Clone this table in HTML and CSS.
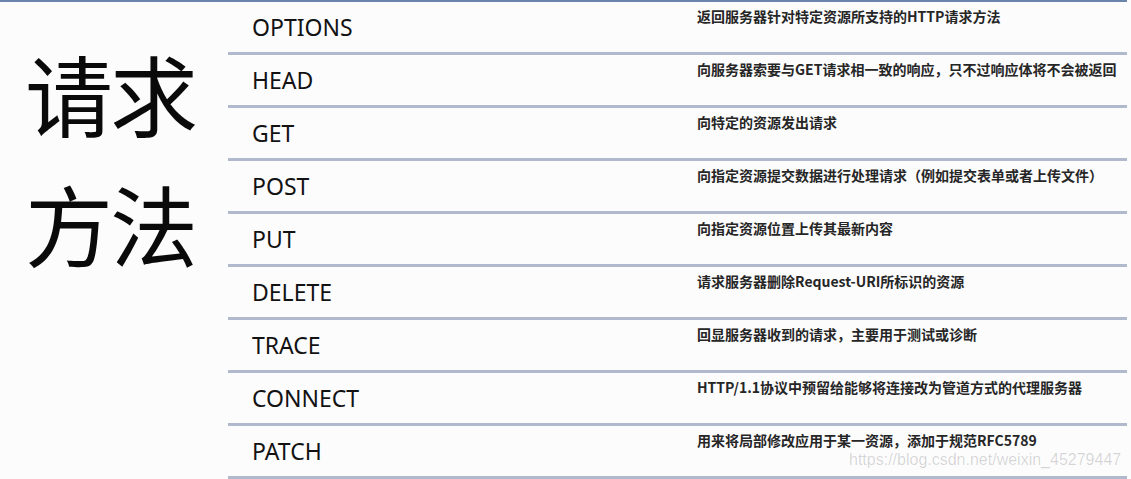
FILE: index.html
```html
<!DOCTYPE html>
<html lang="zh">
<head>
<meta charset="utf-8">
<title>请求方法</title>
<link rel="stylesheet" href="styles.css">
</head>
<body>
<div class="slide">
  <div class="topline"></div>
  <div class="content">
    <div class="title">请求<br>方法</div>
    <div class="table">
      <div class="row"><div class="name">OPTIONS</div><div class="desc">返回服务器针对特定资源所支持的HTTP请求方法</div></div>
      <div class="row"><div class="name">HEAD</div><div class="desc">向服务器索要与GET请求相一致的响应，只不过响应体将不会被返回</div></div>
      <div class="row"><div class="name">GET</div><div class="desc">向特定的资源发出请求</div></div>
      <div class="row"><div class="name">POST</div><div class="desc">向指定资源提交数据进行处理请求（例如提交表单或者上传文件）</div></div>
      <div class="row"><div class="name">PUT</div><div class="desc">向指定资源位置上传其最新内容</div></div>
      <div class="row"><div class="name">DELETE</div><div class="desc">请求服务器删除Request-URI所标识的资源</div></div>
      <div class="row"><div class="name">TRACE</div><div class="desc">回显服务器收到的请求，主要用于测试或诊断</div></div>
      <div class="row"><div class="name">CONNECT</div><div class="desc">HTTP/1.1协议中预留给能够将连接改为管道方式的代理服务器</div></div>
      <div class="row"><div class="name">PATCH</div><div class="desc">用来将局部修改应用于某一资源，添加于规范RFC5789</div></div>
    </div>
  </div>
  <div class="watermark">https://blog.csdn.net/weixin_45279447</div>
</div>
</body>
</html>
```
FILE: styles.css
```css
html, body {
  margin: 0;
  padding: 0;
  background: #fcfcfd;
}
.slide {
  position: relative;
  width: 1131px;
  height: 479px;
  overflow: hidden;
}
.topline {
  width: 1127px;
  height: 2px;
  background: #6a84ad;
}
.content {
  display: flex;
}
.title {
  width: 203px;
  padding-left: 25px;
  padding-top: 25px;
  font-family: "Noto Sans CJK SC", sans-serif;
  font-size: 88px;
  font-weight: 400;
  line-height: 130px;
  color: #0a0a0a;
  letter-spacing: -3px;
}
.table {
  width: 899px;
}
.row {
  display: flex;
  height: 50px;
  border-bottom: 3px solid #b1b9cd;
  padding-left: 24px;
}
.name {
  width: 445px;
  font-family: "Noto Sans", sans-serif;
  font-size: 23px;
  line-height: 50px;
  color: #121212;
}
.desc {
  padding-top: 6px;
  font-family: "Noto Sans CJK SC", sans-serif;
  font-size: 14px;
  font-weight: 700;
  line-height: 17px;
  color: #262626;
  white-space: nowrap;
}
.watermark {
  position: absolute;
  left: 849px;
  top: 451px;
  font-family: "Liberation Sans", Arial, sans-serif;
  font-size: 16px;
  color: rgba(0, 0, 0, 0.16);
  white-space: nowrap;
}
```
